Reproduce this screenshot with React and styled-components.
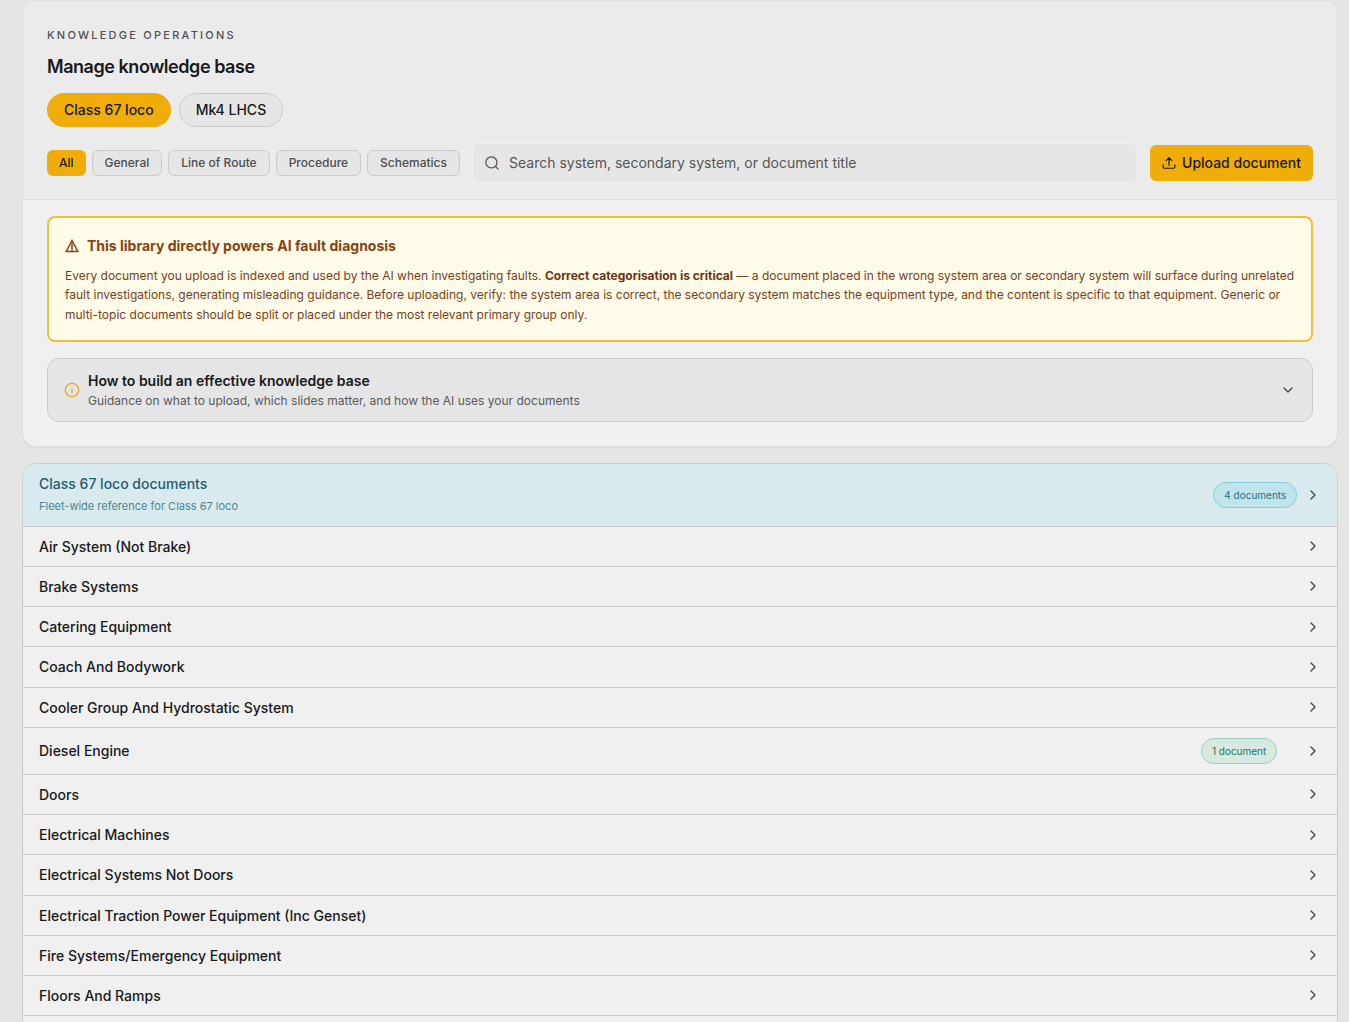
import React from 'react'
import styled, { createGlobalStyle } from 'styled-components'

const GlobalStyle = createGlobalStyle`
    * {
        box-sizing: border-box;
    }
    body {
        margin: 0;
        height: 1022px;
        overflow: hidden;
        background: #e5e5e5;
        color: #18191b;
        font-family: Inter, "Liberation Sans", sans-serif;
    }
    button {
        font-family: inherit;
        cursor: pointer;
    }
    svg {
        display: block;
        flex-shrink: 0;
    }
`

const Page = styled.main`
    display: flex;
    flex-direction: column;
    gap: 16px;
    height: 1022px;
    overflow: hidden;
    padding: 0 11px 0 22px;
`

const Panel = styled.section`
    flex-shrink: 0;
    height: 447px;
    border: 1px solid #e0e0e0;
    border-radius: 14px;
    background: #f0f0f0;
    box-shadow: 0 1px 2px rgba(0, 0, 0, 0.06);
    overflow: hidden;
`

const PanelHeader = styled.header`
    height: 199px;
    padding: 26px 24px 0;
    background: #ebebeb;
    border-bottom: 1px solid #dedede;
`

const Eyebrow = styled.p`
    margin: 0;
    font-size: 11px;
    line-height: 16px;
    font-weight: 500;
    letter-spacing: 2.25px;
    text-transform: uppercase;
    color: #505050;
`

const Title = styled.h1`
    margin: 10px 0 0;
    font-size: 18px;
    line-height: 28px;
    font-weight: 600;
    letter-spacing: -0.45px;
`

const FleetTabs = styled.div`
    display: flex;
    gap: 8px;
    margin-top: 12px;
`

const FleetTab = styled.button`
    height: 34px;
    padding: 0 16px 1px;
    border: 1px solid ${({ $active }) => ($active ? '#f0ac08' : '#cbcbcb')};
    border-radius: 17px;
    background: ${({ $active }) => ($active ? '#f0ac08' : '#e6e6e6')};
    color: #18191b;
    font-size: 14px;
    font-weight: 500;
`

const Toolbar = styled.div`
    display: flex;
    align-items: center;
    gap: 12px;
    margin-top: 16px;
`

const Filters = styled.div`
    display: flex;
    gap: 6px;
`

const Filter = styled.button`
    height: 26px;
    padding: 0 12px 1px;
    border: ${({ $active }) => ($active ? '0' : '1px solid #cbcbcb')};
    border-radius: 6px;
    background: ${({ $active }) => ($active ? '#f0ac08' : '#e6e6e6')};
    color: ${({ $active }) => ($active ? '#18191b' : '#4d4d4d')};
    font-size: 12px;
    font-weight: 500;
`

const SearchBox = styled.label`
    display: flex;
    flex: 1;
    align-items: center;
    gap: 10px;
    height: 40px;
    padding: 0 12px;
    border: 1px solid #f2f2f2;
    border-radius: 7px;
    background: #e6e6e6;
    color: #484848;
`

const SearchInput = styled.input`
    flex: 1;
    min-width: 0;
    padding: 0 0 2px;
    border: 0;
    outline: 0;
    background: transparent;
    font-family: inherit;
    font-size: 14px;

    &::placeholder {
        color: #555;
        opacity: 1;
    }
`

const UploadButton = styled.button`
    display: flex;
    align-items: center;
    justify-content: center;
    gap: 6px;
    width: 163px;
    height: 36px;
    padding: 0 0 1px;
    border: 0;
    border-radius: 6px;
    background: #f0ac08;
    color: #18191b;
    font-size: 14px;
    font-weight: 500;
`

const PanelBody = styled.div`
    display: flex;
    flex-direction: column;
    gap: 16px;
    padding: 16px 24px 24px;
`

const Notice = styled.div`
    height: 126px;
    padding: 18px 16px 0;
    border: 2px solid #f2bf3a;
    border-radius: 8px;
    background: #fffbe8;
    color: #78401b;
`

const NoticeTitle = styled.h2`
    display: flex;
    align-items: center;
    gap: 8px;
    margin: 0 0 9.75px;
    font-size: 14px;
    line-height: 20px;
    font-weight: 700;
    color: #894312;
`

const NoticeText = styled.p`
    margin: 0;
    font-size: 12px;
    line-height: 19.5px;
    white-space: nowrap;

    strong {
        font-weight: 700;
        color: #6b3410;
    }
`

const Guide = styled.button`
    display: flex;
    align-items: center;
    gap: 8px;
    height: 64px;
    padding: 0 16px;
    border: 1px solid #cbcbcb;
    border-radius: 12px;
    background: #e5e5e5;
    color: #4a4a4a;
    text-align: left;
`

const InfoMark = styled.span`
    color: #e6ab22;
`

const GuideText = styled.span`
    flex: 1;
`

const GuideTitle = styled.span`
    display: block;
    font-size: 14px;
    line-height: 20px;
    font-weight: 600;
    color: #18191b;
`

const GuideHint = styled.span`
    display: block;
    font-size: 12px;
    line-height: 19px;
    color: #5a5a5a;
`

const List = styled.section`
    flex-shrink: 0;
    border: 1px solid #cbcbcb;
    border-radius: 14px 14px 0 0;
    background: #f0f0f0;
    overflow: hidden;
`

const Row = styled.div`
    display: flex;
    align-items: center;
    height: ${({ $tall }) => ($tall ? '47.45px' : '40.15px')};
    padding: 0 16px;
    border-bottom: 1px solid #cbcbcb;
    color: #444;

    svg {
        margin-bottom: 0.5px;
    }
`

const FleetRow = styled(Row)`
    height: 63px;
    background: #d8eaee;
`

const RowLabel = styled.span`
    flex: 1;
    padding-top: 0.8px;
    font-size: 14px;
    line-height: 20px;
    font-weight: 500;
    color: #18191b;
`

const FleetText = styled.div`
    flex: 1;
    padding-bottom: 2px;
`

const FleetName = styled.div`
    font-size: 14px;
    line-height: 20px;
    font-weight: 500;
    color: #1d5e70;
`

const FleetHint = styled.div`
    margin-top: 4px;
    font-size: 11px;
    line-height: 17px;
    color: #4c8593;
`

const Badge = styled.span`
    height: 26px;
    margin-right: ${({ $fleet }) => ($fleet ? '8px' : '28px')};
    padding: 0 9.7px 0 10.3px;
    border: 1px solid ${({ $fleet }) => ($fleet ? '#80cfdc' : '#94d3ba')};
    border-radius: 13px;
    background: ${({ $fleet }) => ($fleet ? '#c0e4e9' : '#d8e9e2')};
    color: ${({ $fleet }) => ($fleet ? '#217286' : '#227660')};
    font-size: 10px;
    line-height: 25px;
`

const Icon = ({ size = 16, stroke = 2, join = 'round', children }) => (
    <svg width={size} height={size} viewBox="0 0 24 24" fill="none" stroke="currentColor"
        strokeWidth={stroke} strokeLinecap="round" strokeLinejoin={join}>
        {children}
    </svg>
)

const ChevronRight = () => (
    <Icon><path d="m9 18 6-6-6-6" /></Icon>
)

const groups = [
    { name: 'Air System (Not Brake)' },
    { name: 'Brake Systems' },
    { name: 'Catering Equipment' },
    { name: 'Coach And Bodywork' },
    { name: 'Cooler Group And Hydrostatic System' },
    { name: 'Diesel Engine', count: '1 document' },
    { name: 'Doors' },
    { name: 'Electrical Machines' },
    { name: 'Electrical Systems Not Doors' },
    { name: 'Electrical Traction Power Equipment (Inc Genset)' },
    { name: 'Fire Systems/Emergency Equipment' },
    { name: 'Floors And Ramps' },
]

const filters = ['All', 'General', 'Line of Route', 'Procedure', 'Schematics']

const App = () => {
    return (
        <>
            <GlobalStyle />
            <Page>
                <Panel>
                    <PanelHeader>
                        <Eyebrow>Knowledge operations</Eyebrow>
                        <Title>Manage knowledge base</Title>
                        <FleetTabs>
                            <FleetTab $active>Class 67 loco</FleetTab>
                            <FleetTab>Mk4 LHCS</FleetTab>
                        </FleetTabs>
                        <Toolbar>
                            <Filters>
                                {filters.map((name, i) => (
                                    <Filter key={name} $active={i === 0}>{name}</Filter>
                                ))}
                            </Filters>
                            <SearchBox>
                                <Icon size={14}>
                                    <circle cx="11" cy="11" r="9.5" />
                                    <path d="m22.5 22.5-4.5-4.5" />
                                </Icon>
                                <SearchInput placeholder="Search system, secondary system, or document title" />
                            </SearchBox>
                            <UploadButton>
                                <Icon size={14}>
                                    <path d="M12 16V3M7 8l5-5 5 5M2 15v4a2 2 0 0 0 2 2h16a2 2 0 0 0 2-2v-4" />
                                </Icon>
                                Upload document
                            </UploadButton>
                        </Toolbar>
                    </PanelHeader>
                    <PanelBody>
                        <Notice>
                            <NoticeTitle>
                                <Icon size={14} stroke={2.6} join="miter">
                                    <path d="M12 2.6 2.1 21.4h19.8zM12 9v7.5M12 19v1" />
                                </Icon>
                                This library directly powers AI fault diagnosis
                            </NoticeTitle>
                            <NoticeText>
                                Every document you upload is indexed and used by the AI when investigating faults. <strong>Correct categorisation is critical</strong> — a document placed in the wrong system area or secondary system will surface during unrelated<br />
                                fault investigations, generating misleading guidance. Before uploading, verify: the system area is correct, the secondary system matches the equipment type, and the content is specific to that equipment. Generic or<br />
                                multi-topic documents should be split or placed under the most relevant primary group only.
                            </NoticeText>
                        </Notice>
                        <Guide>
                            <InfoMark>
                                <Icon>
                                    <circle cx="12" cy="12" r="10" />
                                    <path d="M12 11.5v4.5M12 8v.1" />
                                </Icon>
                            </InfoMark>
                            <GuideText>
                                <GuideTitle>How to build an effective knowledge base</GuideTitle>
                                <GuideHint>Guidance on what to upload, which slides matter, and how the AI uses your documents</GuideHint>
                            </GuideText>
                            <Icon><path d="m6 9 6 6 6-6" /></Icon>
                        </Guide>
                    </PanelBody>
                </Panel>
                <List>
                    <FleetRow>
                        <FleetText>
                            <FleetName>Class 67 loco documents</FleetName>
                            <FleetHint>Fleet-wide reference for Class 67 loco</FleetHint>
                        </FleetText>
                        <Badge $fleet>4 documents</Badge>
                        <ChevronRight />
                    </FleetRow>
                    {groups.map(({ name, count }) => (
                        <Row key={name} $tall={!!count}>
                            <RowLabel>{name}</RowLabel>
                            {count && <Badge>{count}</Badge>}
                            <ChevronRight />
                        </Row>
                    ))}
                    <Row />
                </List>
            </Page>
        </>
    )
}

export default App
